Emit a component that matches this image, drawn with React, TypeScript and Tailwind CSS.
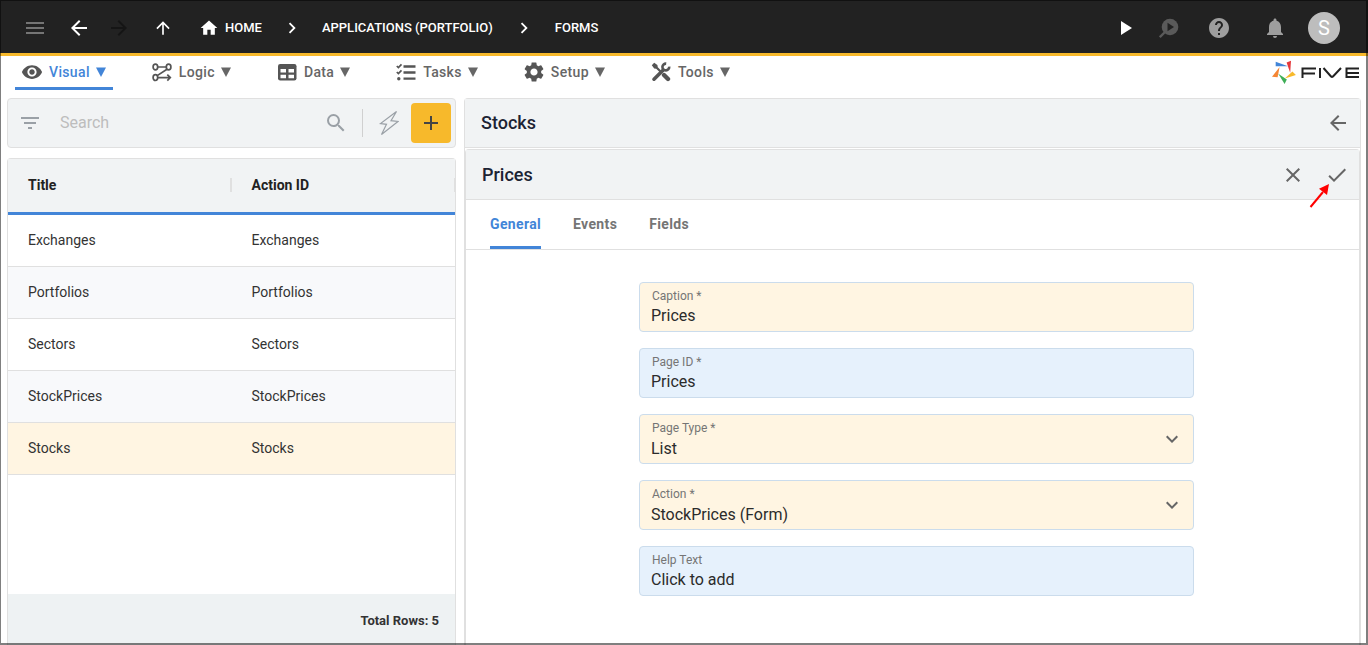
import type { ReactNode } from 'react';
import {
  MdAdd,
  MdArrowBack,
  MdArrowForward,
  MdArrowUpward,
  MdCheck,
  MdChevronRight,
  MdClose,
  MdFilterList,
  MdHelp,
  MdHome,
  MdKeyboardArrowDown,
  MdMenu,
  MdNotifications,
  MdPlayArrow,
  MdSearch,
  MdSettings,
  MdVisibility,
} from 'react-icons/md';

const rows = ['Exchanges', 'Portfolios', 'Sectors', 'StockPrices', 'Stocks'];

function LogicIcon() {
  return (
    <svg width="20" height="20" viewBox="0 0 20 20" fill="none" stroke="currentColor" strokeWidth="1.7">
      <ellipse cx="3.4" cy="5" rx="2.3" ry="2.9" />
      <ellipse cx="16.6" cy="5" rx="2.3" ry="2.9" />
      <ellipse cx="3.4" cy="15.6" rx="2.3" ry="2.9" />
      <path d="M5.700 5h8.600M15 7.200 5.200 13.600M5.700 15.600H18M15.300 12.600l3 3-3 3" />
    </svg>
  );
}

function DataIcon() {
  return (
    <svg width="20" height="20" viewBox="0 0 20 20">
      <rect x="1" y="2" width="18.500" height="16.500" rx="2.200" fill="currentColor" />
      <path d="M3.500 7h5.500v3.500H3.500zM11.500 7H17v3.500h-5.500zM3.500 12.700h5.500v3.500H3.500zM11.500 12.700H17v3.500h-5.500z" fill="#fff" />
    </svg>
  );
}

function TasksIcon() {
  return (
    <svg width="20" height="20" viewBox="0 0 20 20" fill="none" stroke="currentColor">
      <path d="M7.500 4.500h12M7.500 10.500h12M7.500 16.700h12" strokeWidth="2.300" />
      <path d="M.8 4l1.600 1.600L5.500 2.400M.8 10l1.600 1.600 3.100-3.200" strokeWidth="1.700" />
      <circle cx="2.800" cy="16.700" r="1.700" fill="currentColor" stroke="none" />
    </svg>
  );
}

function ToolsIcon() {
  return (
    <svg width="20" height="20" viewBox="0 0 20 20" fill="none" stroke="currentColor">
      <path d="M3 17.200l9-9" strokeWidth="3.600" strokeLinecap="round" />
      <path d="M18.200 4.600a3.400 3.400 0 1 1-3-3" strokeWidth="2.600" />
      <path d="M.8 3.200l2.400-2.400 3.200 2.200.4 2.200L10.300 8.800 8.800 10.300 5.200 6.800 3.200 6.400z" fill="currentColor" stroke="none" />
      <path d="M13 13l4 4" strokeWidth="4.400" strokeLinecap="round" />
    </svg>
  );
}

function DebugIcon() {
  return (
    <svg width="20" height="22" viewBox="0 -1 20 22" fill="none">
      <path d="M6 14 .8 19.200" stroke="currentColor" strokeWidth="2.400" />
      <circle cx="11" cy="9" r="8.300" fill="currentColor" />
      <path d="M8.500 4.800v8.400L15 9z" fill="#222" />
    </svg>
  );
}

function BoltIcon() {
  return (
    <svg width="20" height="26" viewBox="0 0 20 26" fill="none" stroke="currentColor" strokeWidth="1.200">
      <path d="M17.500 1.500 1.500 13.500l6 .8L2.500 24.500l16.500-13-7-.8z" />
    </svg>
  );
}

function Logo() {
  return (
    <svg width="88" height="24" viewBox="0 0 88 24" role="img" aria-label="Five">
      <path d="M3.700 1.800v4.400h12.300z" fill="#4285d8" />
      <path d="M14.600 2.400 19 .8l-.8 12z" fill="#e5383b" />
      <path d="M7.600 7 0 16.800l5.600.4z" fill="#f58634" />
      <path d="M6.300 13.800 14.800 19.500l-2.200 4.500z" fill="#3fae57" />
      <path d="M12.800 18.500 20.400 11.600l3.500 3.500z" fill="#f7b92b" />
      <g fill="none" stroke="#222" strokeWidth="2">
        <path d="M30.500 18V8.500H44M30.500 13.500H43M48 8v10M51.500 8l7.500 8.500q1 .8 2 0L69 8M87 8.500H74.500v8.500H87M74 13h13" />
      </g>
    </svg>
  );
}

const menus = [
  { label: 'Visual', icon: <MdVisibility size={22} className="-mx-px" />, active: true },
  { label: 'Logic', icon: <LogicIcon /> },
  { label: 'Data', icon: <DataIcon /> },
  { label: 'Tasks', icon: <TasksIcon /> },
  { label: 'Setup', icon: <MdSettings size={24} className="-mx-0.5" /> },
  { label: 'Tools', icon: <ToolsIcon /> },
];

function IconButton({ label, className = '', children }: { label: string; className?: string; children: ReactNode }) {
  return (
    <button type="button" aria-label={label} className={`flex items-center justify-center shrink-0 ${className}`}>
      {children}
    </button>
  );
}

function TopBar() {
  return (
    <header className="flex h-14 shrink-0 items-center justify-between border-b-3 border-[#f7b92b] bg-[#222] pt-[3px] pr-7 pl-[23px] text-white">
      <div className="flex items-center">
        <IconButton label="Menu" className="w-6 text-[#757575]"><MdMenu size={24} /></IconButton>
        <IconButton label="Back" className="ml-5 w-6"><MdArrowBack size={24} /></IconButton>
        <IconButton label="Forward" className="ml-4 w-6 text-[#151515]"><MdArrowForward size={24} /></IconButton>
        <IconButton label="Up" className="ml-5 w-6"><MdArrowUpward size={20} /></IconButton>
        <nav className="ml-6 flex items-center text-[13px] font-medium">
          <a href="#home" className="flex items-center gap-1.5"><MdHome size={20} />HOME</a>
          <MdChevronRight size={22} className="mx-[19px]" />
          <a href="#applications">APPLICATIONS (PORTFOLIO)</a>
          <MdChevronRight size={22} className="mx-5" />
          <a href="#forms">FORMS</a>
        </nav>
      </div>
      <div className="flex items-center">
        <IconButton label="Run" className="w-6"><MdPlayArrow size={24} /></IconButton>
        <IconButton label="Debug" className="ml-[22px] w-5 text-[#5a5a5a]"><DebugIcon /></IconButton>
        <IconButton label="Help" className="ml-7 w-6 text-[#9e9e9e]"><MdHelp size={24} /></IconButton>
        <IconButton label="Notifications" className="ml-8 w-6 text-[#9e9e9e]"><MdNotifications size={24} /></IconButton>
        <IconButton label="Account" className="ml-[21px] size-8 rounded-full bg-[#bdbdbd] text-xl">S</IconButton>
      </div>
    </header>
  );
}

function MenuBar() {
  return (
    <div className="flex h-[42px] shrink-0 items-start justify-between pr-2 pl-[15px]">
      <nav className="flex gap-8">
        {menus.map((menu) => (
          <button
            key={menu.label}
            type="button"
            className={`flex h-[34px] items-center border-b-3 px-[7px] text-sm font-medium tracking-wide ${
              menu.active ? 'border-[#4285d8] text-[#4285d8]' : 'border-transparent text-[#666]'
            }`}
          >
            <span className="mr-[7px] text-[#555]">{menu.icon}</span>
            {menu.label}
            <svg width="10" height="10" viewBox="0 0 10 10" className="ml-1.5">
              <path d="M0 .5h10L5 10z" fill="currentColor" />
            </svg>
          </button>
        ))}
      </nav>
      <div className="pt-1"><Logo /></div>
    </div>
  );
}

function FormList() {
  return (
    <section className="flex w-[449px] shrink-0 flex-col gap-2.5">
      <div className="flex h-[50px] shrink-0 items-center rounded border border-[#e0e0e0] bg-[#f1f3f4] pr-1 pl-2.5 text-[#9aa0a6]">
        <IconButton label="Filter" className="w-6"><MdFilterList size={24} /></IconButton>
        <input
          type="search"
          aria-label="Search"
          placeholder="Search"
          className="ml-[18px] min-w-0 flex-1 bg-transparent text-base outline-none placeholder:text-[#bdbdbd]"
        />
        <IconButton label="Run search" className="w-6"><MdSearch size={24} /></IconButton>
        <span className="mx-3.5 h-7 w-px bg-[#d0d0d0]" />
        <IconButton label="Quick actions" className="mr-2.5 w-6"><BoltIcon /></IconButton>
        <IconButton label="Add" className="size-10 rounded bg-[#f7b92b] text-[#444]"><MdAdd size={24} /></IconButton>
      </div>
      <div className="flex min-h-0 flex-1 flex-col rounded-t border border-b-0 border-[#e0e0e0]">
        <table className="w-full table-fixed border-separate border-spacing-0 text-left text-sm text-[#333]">
          <thead>
            <tr className="bg-[#f1f3f4] text-[#222]">
              <th className="h-14 border-b-3 border-[#4285d8] p-0 pb-0.5 font-bold">
                <div className="border-r-2 border-[#e0e0e0] pl-5 leading-[14px]">Title</div>
              </th>
              <th className="h-14 border-b-3 border-[#4285d8] p-0 pb-0.5 font-bold">
                <div className="border-r border-[#e0e0e0] pl-5 leading-[14px]">Action ID</div>
              </th>
            </tr>
          </thead>
          <tbody>
            {rows.map((row) => (
              <tr key={row} className={row === 'Stocks' ? 'bg-[#fff5e2]' : 'even:bg-[#f8f9fb]'}>
                <td className="h-[52px] border-b border-[#e0e0e0] px-5 pb-0.5">{row}</td>
                <td className="h-[52px] border-b border-[#e0e0e0] px-5 pb-0.5">{row}</td>
              </tr>
            ))}
          </tbody>
        </table>
        <div className="mt-auto flex h-[51px] items-center justify-end bg-[#eef2f3] px-4 pt-0.5 text-[13px] font-bold text-[#333]">
          Total Rows: 5
        </div>
      </div>
    </section>
  );
}

const fieldBox = 'h-[50px] w-full rounded border border-[#cbdcec] px-[11px] text-base text-[#2b2b2b] outline-none';

function Field({ id, label, value, blue, select }: { id: string; label: string; value: string; blue?: boolean; select?: boolean }) {
  const colour = blue ? 'bg-[#e6f1fc]' : 'bg-[#fff5e2]';
  return (
    <div className="relative">
      <label htmlFor={id} className="absolute top-1.5 left-[13px] text-xs text-[#757575]">{label}</label>
      {select ? (
        <>
          <select id={id} defaultValue={value} className={`appearance-none pt-5 ${fieldBox} ${colour}`}>
            <option>{value}</option>
          </select>
          <MdKeyboardArrowDown size={24} className="pointer-events-none absolute top-[13px] right-2.5 text-[#666]" />
        </>
      ) : (
        <input id={id} type="text" defaultValue={value} className={`pt-4 ${fieldBox} ${colour}`} />
      )}
    </div>
  );
}

function PageForm() {
  return (
    <section className="flex min-w-0 flex-1 flex-col rounded-t border border-b-0 border-[#e0e0e0]">
      <div className="flex h-[49px] shrink-0 items-center justify-between border-b border-[#e0e0e0] bg-[#f1f3f4] pr-2.5 pl-4 text-[#666]">
        <h1 className="text-lg font-medium text-[#1c2333]">Stocks</h1>
        <IconButton label="Back to list" className="w-6"><MdArrowBack size={24} /></IconButton>
      </div>
      <div className="mt-px flex flex-1 flex-col rounded-t border border-b-0 border-[#e0e0e0]">
        <div className="flex h-[50px] shrink-0 items-center justify-between border-b border-[#e0e0e0] bg-[#f1f3f4] pr-2.5 pl-4 text-[#666]">
          <h2 className="text-lg font-medium text-[#1c2333]">Prices</h2>
          <div className="relative flex gap-5">
            <IconButton label="Cancel" className="w-6"><MdClose size={24} /></IconButton>
            <IconButton label="Save" className="w-6"><MdCheck size={24} /></IconButton>
            <svg width="22" height="26" viewBox="0 0 22 26" className="absolute top-5 right-[18px] text-[#f00]">
              <path d="M1.500 24 14 9" stroke="currentColor" strokeWidth="2" />
              <path d="M20 1 10 5.800l8 6.200z" fill="currentColor" />
            </svg>
          </div>
        </div>
        <div className="flex h-[50px] shrink-0 gap-8 border-b border-[#e0e0e0] px-6 text-sm font-bold text-[#757575]">
          <button type="button" className="rounded-t-xs border-b-3 border-[#4285d8] pt-px tracking-wide text-[#4285d8]">General</button>
          <button type="button" className="pb-0.5 tracking-wide">Events</button>
          <button type="button" className="pb-0.5 tracking-wide">Fields</button>
        </div>
        <div className="pt-8 pl-2">
          <form className="mx-auto flex w-full max-w-[555px] flex-col gap-4">
            <Field id="caption" label="Caption *" value="Prices" />
            <Field id="page-id" label="Page ID *" value="Prices" blue />
            <Field id="page-type" label="Page Type *" value="List" select />
            <Field id="action" label="Action *" value="StockPrices (Form)" select />
            <Field id="help-text" label="Help Text" value="Click to add" blue />
          </form>
        </div>
      </div>
    </section>
  );
}

export default function App() {
  return (
    <div className="flex min-h-screen flex-col bg-white font-['Roboto',sans-serif]">
      <TopBar />
      <MenuBar />
      <main className="flex flex-1 gap-2 px-[7px]">
        <FormList />
        <PageForm />
      </main>
      <div className="pointer-events-none fixed inset-0 border border-r-2 border-b-2 border-black/50" />
    </div>
  );
}
